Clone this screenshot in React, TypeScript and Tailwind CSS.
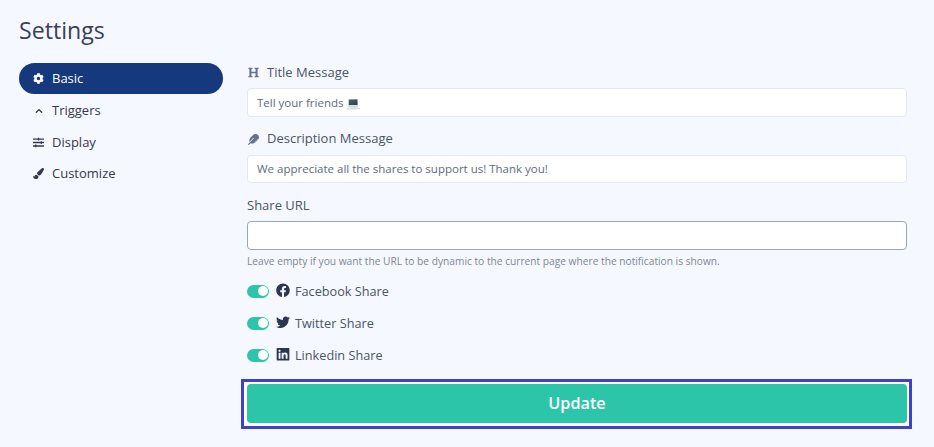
import { FaCog, FaChevronUp, FaSlidersH, FaPaintBrush, FaHeading, FaFeather, FaFacebook, FaTwitter, FaLinkedin } from "react-icons/fa";
import type { ReactNode } from "react";

function NavItem({ icon, label, active }: { icon: ReactNode; label: string; active?: boolean }) {
  return (
    <div className={active ? "flex h-[31px] items-center rounded-full bg-[#16387c] pl-[14px] text-white" : "flex h-[31px] items-center rounded-full pl-[14px] text-[#37374f] last:h-[29px]"}>
      <span className="flex w-[11px] justify-center text-[11px]">{icon}</span>
      <span className="ml-[8px] text-[13px]">{label}</span>
    </div>
  );
}

function Toggle({ icon, label }: { icon: ReactNode; label: string }) {
  return (
    <div className="flex h-[14px] items-center">
      <div className="flex h-[13px] w-[22px] items-center justify-end rounded-full bg-[#2dc5aa] pr-[1.5px]">
        <div className="h-[10px] w-[10px] rounded-full bg-white" />
      </div>
      <span className="mb-[2px] ml-[7px] flex w-[14px] justify-center text-[14.5px] text-[#2c3650]">{icon}</span>
      <span className="ml-[5px] mt-[2px] text-[12.7px] text-[#4a5468]">{label}</span>
    </div>
  );
}

export default function App() {
  return (
    <div className="flex h-[447px] w-[934px] flex-col overflow-hidden bg-[#f6f8ff] pl-[19px] pr-[27px] pt-[14px] font-['Open_Sans',sans-serif]">
      <h1 className="h-[33px] text-[23.15px] leading-[33px] text-[#37415a]">Settings</h1>
      <div className="mt-[16px] flex">
        <nav className="flex w-[204px] flex-col gap-[1px]">
          <NavItem active icon={<FaCog />} label="Basic" />
          <NavItem icon={<FaChevronUp className="text-[8px]" />} label="Triggers" />
          <NavItem icon={<FaSlidersH />} label="Display" />
          <NavItem icon={<FaPaintBrush />} label="Customize" />
        </nav>
        <main className="ml-[24px] flex w-[660px] flex-col">
          <label className="flex h-[18px] items-center pt-[1px] text-[13px] text-[#4a5468]">
            <FaHeading className="ml-[1px] w-[11px] text-[11px] text-[#66718f]" />
            <span className="ml-[8px]">Title Message</span>
          </label>
          <div className="mt-[7px] flex h-[29px] items-center rounded-[4px] border border-[#e2e8f5] bg-white px-[9px] pt-[1px] text-[11.5px] text-[#5f6a80]">
            Tell your friends 💻
          </div>
          <label className="mt-[13px] flex h-[18px] items-center text-[13px] text-[#4a5468]">
            <FaFeather className="ml-[1px] w-[11px] text-[11px] text-[#66718f]" />
            <span className="ml-[8px]">Description Message</span>
          </label>
          <div className="mt-[7px] flex h-[28px] items-center rounded-[4px] border border-[#e2e8f5] bg-white px-[9px] text-[11.5px] text-[#5f6a80]">
            We appreciate all the shares to support us! Thank you!
          </div>
          <label className="mt-[13px] h-[18px] text-[13px] leading-[18px] text-[#4a5468]">Share URL</label>
          <div className="mt-[7px] h-[29px] rounded-[4px] border border-[#98a5ba] bg-white" />
          <p className="mt-[4px] h-[14px] text-[10.2px] leading-[14px] text-[#7d8798]">
            Leave empty if you want the URL to be dynamic to the current page where the notification is shown.
          </p>
          <div className="mt-[16px] flex flex-col gap-[18px]">
            <Toggle icon={<FaFacebook />} label="Facebook Share" />
            <Toggle icon={<FaTwitter />} label="Twitter Share" />
            <Toggle icon={<FaLinkedin />} label="Linkedin Share" />
          </div>
          <div className="-ml-[3px] -mr-[2px] mt-[20px] bg-white pb-[3px] pl-[3px] pr-[2px] pt-[2px] outline-[3px] outline-[#4040cc]">
            <button className="block h-[39px] w-full rounded-[4px] bg-[#2dc5aa] text-[16.2px] font-[550] text-white">Update</button>
          </div>
        </main>
      </div>
    </div>
  );
}
